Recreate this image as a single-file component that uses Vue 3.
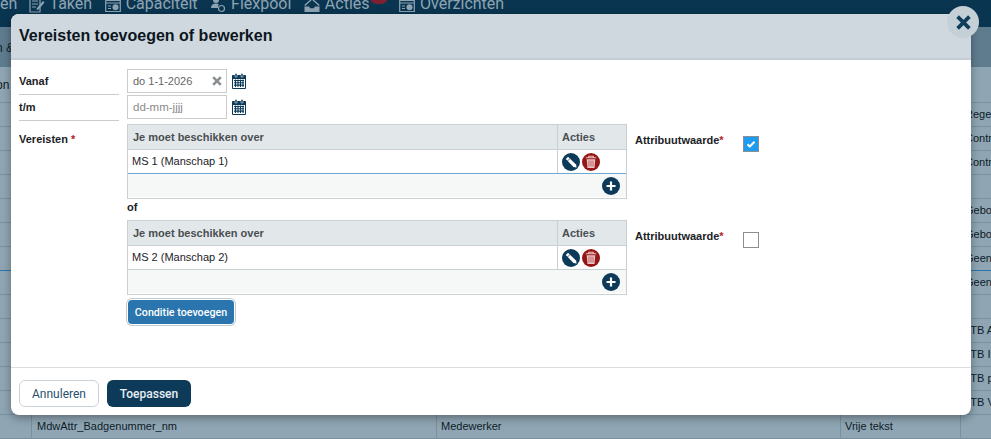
<script setup>
const navItems = [
  { label: 'Taken', icon: 'edit' },
  { label: 'Capaciteit', icon: 'chart' },
  { label: 'Flexpool', icon: 'person' },
  { label: 'Acties', icon: 'inbox', badge: '15' },
  { label: 'Overzichten', icon: 'chart' }
];

// rijen achter de modal, alleen de randen blijven zichtbaar
const rows = [
  'Regels', 'Contract', 'Contract', '', 'Gebouw', 'Gebouw', 'Geen', 'Geen', '', 'LTB A', 'LTB I', 'LTB p', 'LTB V'
];

const conditions = [
  { name: 'MS 1 (Manschap 1)', checked: true },
  { name: 'MS 2 (Manschap 2)', checked: false }
];
</script>

<template>
  <div class="page">
    <nav class="nav">
      <span class="nav-cut">en</span>
      <span v-for="item in navItems" :key="item.label" class="nav-item" :class="{ 'has-badge': item.badge }">
        <svg v-if="item.icon === 'edit'" class="nav-icon" viewBox="0 0 16 16">
          <path d="M1 1h10v14H1z M3 4h6 M3 7h6 M3 10h4" fill="none" stroke="currentColor" stroke-width="1.2" />
          <path d="M8 11l6-7 1.5 1.5-6 7-2 .5z" fill="currentColor" />
        </svg>
        <svg v-else-if="item.icon === 'chart'" class="nav-icon" viewBox="0 0 16 16">
          <path d="M.7 3.5h14.6v11H.7z M.7 6h14.6 M3 9h3 M3 11.5h3" fill="none" stroke="currentColor" stroke-width="1.2" />
          <circle cx="10.5" cy="10.2" r="3" fill="currentColor" />
        </svg>
        <svg v-else-if="item.icon === 'person'" class="nav-icon" viewBox="0 0 16 16">
          <circle cx="6" cy="3" r="3" fill="currentColor" />
          <path d="M1 11c0-3 2-4.5 5-4.5 1 0 2 .2 2.5.6L8 11z" fill="currentColor" />
          <circle cx="11.5" cy="11.5" r="3" fill="none" stroke="currentColor" stroke-width="1.2" />
        </svg>
        <svg v-else class="nav-icon" viewBox="0 0 16 16">
          <path d="M.7 8.500L8 2l7.300 6.500" fill="none" stroke="currentColor" stroke-width="1.300" />
          <path d="M.5 9.500h4.500l1.200 1.800h3.600l1.200-1.800h4.500v5.500H.5z" fill="currentColor" />
        </svg>
        {{ item.label }}
        <span v-if="item.badge" class="nav-badge">{{ item.badge }}</span>
      </span>
    </nav>

    <div class="band">
      <span class="band-top">n &amp;</span>
      <span class="band-bottom">on</span>
    </div>

    <div v-for="(text, i) in rows" :key="i" class="row" :class="{ 'row-blue': i === 6 }">
      <span class="cell cell-a"></span>
      <span class="cell cell-b"></span>
      <span class="cell cell-c"></span>
      <span class="cell cell-d"></span>
      <span class="cell cell-e">{{ text }}</span>
    </div>
    <div class="row">
      <span class="cell cell-a"></span>
      <span class="cell cell-b">MdwAttr_Badgenummer_nm</span>
      <span class="cell cell-c">Medewerker</span>
      <span class="cell cell-d">Vrije tekst</span>
      <span class="cell cell-e"></span>
    </div>

    <div class="modal">
      <header class="modal-head">
        <h1>Vereisten toevoegen of bewerken</h1>
      </header>

      <div class="modal-body">
        <div class="form-row">
          <label class="lbl lbl-line">Vanaf</label>
          <div class="date-field">
            <span class="date-value">do 1-1-2026</span>
            <svg class="clear" viewBox="0 0 10 10">
              <path d="M1.200 1.200l7.600 7.600M8.800 1.200l-7.600 7.600" stroke="#8a8f93" stroke-width="2.600" fill="none" />
            </svg>
          </div>
          <svg class="cal" viewBox="0 0 14 16">
            <path d="M.5 2.500h13v13H.5z" fill="#fff" stroke="#0d3a59" />
            <path d="M.5 2.500h13V6H.5z" fill="#0d3a59" />
            <path d="M3 .5h2v3.500H3zM9 .5h2v3.500H9z" fill="#0d3a59" stroke="#fff" stroke-width=".5" />
            <path d="M2 7.500h10M2 9.800h10M2 12.100h10M3.500 6.500v7.500M6 6.500v7.500M8.500 6.500v7.500M11 6.500v7.500" stroke="#0d3a59" stroke-width="1.100" />
          </svg>
        </div>
        <div class="form-row">
          <label class="lbl lbl-line">t/m</label>
          <div class="date-field">
            <span class="date-empty">dd-mm-jjjj</span>
          </div>
          <svg class="cal" viewBox="0 0 14 16">
            <path d="M.5 2.500h13v13H.5z" fill="#fff" stroke="#0d3a59" />
            <path d="M.5 2.500h13V6H.5z" fill="#0d3a59" />
            <path d="M3 .5h2v3.500H3zM9 .5h2v3.500H9z" fill="#0d3a59" stroke="#fff" stroke-width=".5" />
            <path d="M2 7.500h10M2 9.800h10M2 12.100h10M3.500 6.500v7.500M6 6.500v7.500M8.500 6.500v7.500M11 6.500v7.500" stroke="#0d3a59" stroke-width="1.100" />
          </svg>
        </div>

        <div class="req">
          <label class="lbl lbl-req">Vereisten <span class="star">*</span></label>
          <div class="req-main">
            <template v-for="(cond, i) in conditions" :key="cond.name">
              <div v-if="i > 0" class="of">of</div>
              <div class="cond">
                <div class="tbl">
                  <div class="tbl-head">
                    <span class="col-name">Je moet beschikken over</span>
                    <span class="col-act">Acties</span>
                  </div>
                  <div class="tbl-row" :class="{ 'tbl-row-sel': i === 0 }">
                    <span class="col-name col-val">{{ cond.name }}</span>
                    <span class="col-act col-icons">
                      <svg class="round" viewBox="0 0 18 18">
                        <circle cx="9" cy="9" r="9" fill="#0d3a59" />
                        <path d="M3.800 6L6 3.800l8 7.700.6 3.100-3.100-.6z" fill="#fff" />
                        <path d="M5.500 8l2.500-2.500" stroke="#0d3a59" stroke-width=".8" />
                      </svg>
                      <svg class="round" viewBox="0 0 18 18">
                        <circle cx="9" cy="9" r="9" fill="#961516" />
                        <path d="M3.800 4.800h10.400M6.800 4.800V3.300h4.400v1.500" stroke="#eac4c4" stroke-width="1.100" fill="none" />
                        <path d="M4.700 6.200h8.600L12.500 15H5.500z" fill="#eac4c4" />
                        <path d="M7 7.500v6M9 7.500v6M11 7.500v6" stroke="#b8585a" stroke-width=".9" />
                      </svg>
                    </span>
                  </div>
                  <div class="tbl-foot">
                    <svg class="round" viewBox="0 0 18 18">
                      <circle cx="9" cy="9" r="9" fill="#0d3a59" />
                      <path d="M9 4.500v9M4.500 9h9" stroke="#fff" stroke-width="2.200" />
                    </svg>
                  </div>
                </div>
                <div class="attr">
                  <span class="attr-label">Attribuutwaarde<span class="star">*</span></span>
                  <span class="check" :class="{ on: cond.checked }">
                    <svg v-if="cond.checked" viewBox="0 0 10 10">
                      <path d="M1.500 5.200l2.300 2.300 4.700-4.700" stroke="#fff" stroke-width="2" fill="none" />
                    </svg>
                  </span>
                </div>
              </div>
            </template>
            <button class="btn-add">Conditie toevoegen</button>
          </div>
        </div>
      </div>

      <footer class="modal-foot">
        <button class="btn btn-cancel">Annuleren</button>
        <button class="btn btn-apply">Toepassen</button>
      </footer>

      <button class="close" aria-label="Sluiten">
        <svg viewBox="0 0 14 14">
          <path d="M1.500 1.500l11 11M12.500 1.500l-11 11" stroke="#0f3d5c" stroke-width="3.400" fill="none" />
        </svg>
      </button>
    </div>
  </div>
</template>

<style scoped>
.page { position: relative; width: 991px; height: 439px; overflow: hidden; background: #8fa5b3; font-family: "Liberation Sans", Arial, sans-serif; color: #0c1c28; }

.nav { display: flex; align-items: flex-start; gap: 12.5px; height: 27px; background: #0a3550; color: #8fa4b2; font-size: 16px; font-family: Roboto, "Liberation Sans", sans-serif; overflow: hidden; }
.nav-cut { margin-top: -6px; width: 16px; line-height: 19px; }
.nav-item { display: flex; align-items: center; gap: 5px; position: relative; margin-top: -6px; line-height: 19px; }
.nav-item.has-badge { margin-right: 17px; }
.nav-icon { width: 16px; height: 16px; flex: none; margin-top: 3px; }
.nav-badge { position: absolute; right: -18px; top: -4px; width: 18px; height: 14px; border-radius: 8px; background: #7d2030; font-size: 9px; line-height: 14px; text-align: center; }

.band { display: flex; flex-direction: column; height: 76px; box-sizing: border-box; background: linear-gradient(#5f7c8f 0, #5f7c8f 40px, #8fa5b3 40px); border-bottom: 1px solid #78909f; font-size: 12px; }
.band-top { margin-left: -4px; margin-top: 14px; height: 37px; }
.band-bottom { margin-left: -4px; }

.row { display: flex; height: 24px; box-sizing: border-box; border-bottom: 1px solid #78909f; font-size: 11px; line-height: 23px; }
.row-blue { border-bottom-color: #2a75ae; }
.cell { box-sizing: border-box; padding-left: 4px; white-space: nowrap; overflow: hidden; border-right: 1px solid #78909f; }
.cell-a { width: 32px; }
.cell-b { width: 405px; padding-left: 5px; }
.cell-c { width: 404px; }
.cell-d { width: 120px; }
.cell-e { width: 30px; border-right: 0; }

.modal { position: absolute; left: 11px; top: 14px; display: flex; flex-direction: column; width: 960px; height: 401px; background: #fff; border-radius: 8px; box-shadow: 0 3px 9px rgba(0, 0, 0, 0.35); }
.modal-head { height: 46px; box-sizing: border-box; padding: 0 8px; display: flex; align-items: center; background: #d0d8df; border-bottom: 2px solid #c3ced6; border-radius: 8px 8px 0 0; }
.modal-head h1 { margin: 0; font-size: 16px; font-weight: 700; color: #0c1620; }

.modal-body { flex: 1; padding: 9px 8px 0; }
.form-row { display: flex; align-items: flex-start; height: 26px; }
.lbl { display: block; box-sizing: border-box; width: 100px; margin-right: 8px; font-size: 11px; font-weight: 700; color: #1c2226; }
.lbl-line { height: 26px; padding-top: 6px; border-bottom: 1px solid #ccc; }
.lbl-req { padding-top: 9px; }
.star { color: #b3202a; }

.date-field { display: flex; align-items: center; justify-content: space-between; box-sizing: border-box; width: 100px; height: 24px; padding: 0 5px; border: 1px solid #ccc; }
.date-value { color: #666; font-size: 11px; }
.date-empty { color: #8a8a8a; font-size: 11.5px; }
.clear { width: 10px; height: 10px; margin-right: -1px; }
.cal { width: 14px; height: 16px; margin: 4px 0 0 5px; }

.req { display: flex; align-items: flex-start; padding-top: 3px; }
.req-main { display: flex; flex-direction: column; align-items: flex-start; }
.of { height: 21px; line-height: 16px; font-size: 11px; font-weight: 700; color: #1c2226; }
.cond { display: flex; align-items: flex-start; }

.tbl { box-sizing: border-box; width: 500px; height: 75px; border: 1px solid #c8d0d4; font-size: 11px; }
.tbl-head { display: flex; box-sizing: border-box; height: 25px; background: #e2e7ea; border-bottom: 1px solid #c8d0d4; line-height: 24px; font-weight: 700; color: #4a4f53; }
.tbl-row { display: flex; height: 24px; box-sizing: border-box; border-bottom: 1px solid #c8d0d4; line-height: 22px; color: #1c2226; }
.tbl-row-sel { border-bottom-color: #6fa8d0; }
.col-name { box-sizing: border-box; width: 430px; padding-left: 5px; border-right: 1px solid #c8d0d4; }
.col-val { padding-left: 4px; }
.col-act { padding-left: 4px; }
.col-icons { display: flex; align-items: center; gap: 2px; }
.tbl-foot { display: flex; align-items: center; justify-content: flex-end; height: 23px; padding-right: 6px; background: #f6f8f8; }
.round { width: 18px; height: 18px; flex: none; }

.attr { display: flex; align-items: flex-start; padding: 10px 0 0 8px; }
.attr-label { width: 108px; font-size: 11px; font-weight: 700; color: #1c2226; }
.check { display: flex; align-items: center; justify-content: center; box-sizing: border-box; width: 16px; height: 16px; margin-top: 2px; border: 1px solid #8a8f93; background: #fff; }
.check.on { background: #1d9cf0; }
.check svg { width: 10px; height: 10px; }

.btn-add { width: 106px; height: 24px; margin: 5px 0 0 1px; padding: 0; border: 0; border-radius: 4px; background: #2a75ae; box-shadow: 0 0 0 1px #fff, 0 0 0 2px #c0cad2; color: #fff; font-family: Roboto, "Liberation Sans", sans-serif; font-size: 10.7px; font-weight: 500; }

.modal-foot { display: flex; gap: 8px; height: 48px; box-sizing: border-box; padding: 12px 8px 0; border-top: 1px solid #dcdcdc; }
.btn { height: 27px; padding: 0; border-radius: 6px; font-family: Roboto, "Liberation Sans", sans-serif; font-size: 12px; }
.btn-cancel { width: 80px; border: 1px solid #ccd3d8; background: #fff; color: #28506e; }
.btn-apply { width: 84px; border: 0; background: #0d3a59; color: #e8eef2; font-weight: 500; }

.close { position: absolute; left: 936px; top: -8px; display: flex; align-items: center; justify-content: center; width: 32px; height: 32px; padding: 0; border: 0; border-radius: 50%; background: #c4cfd6; }
.close svg { width: 15px; height: 15px; }
</style>
